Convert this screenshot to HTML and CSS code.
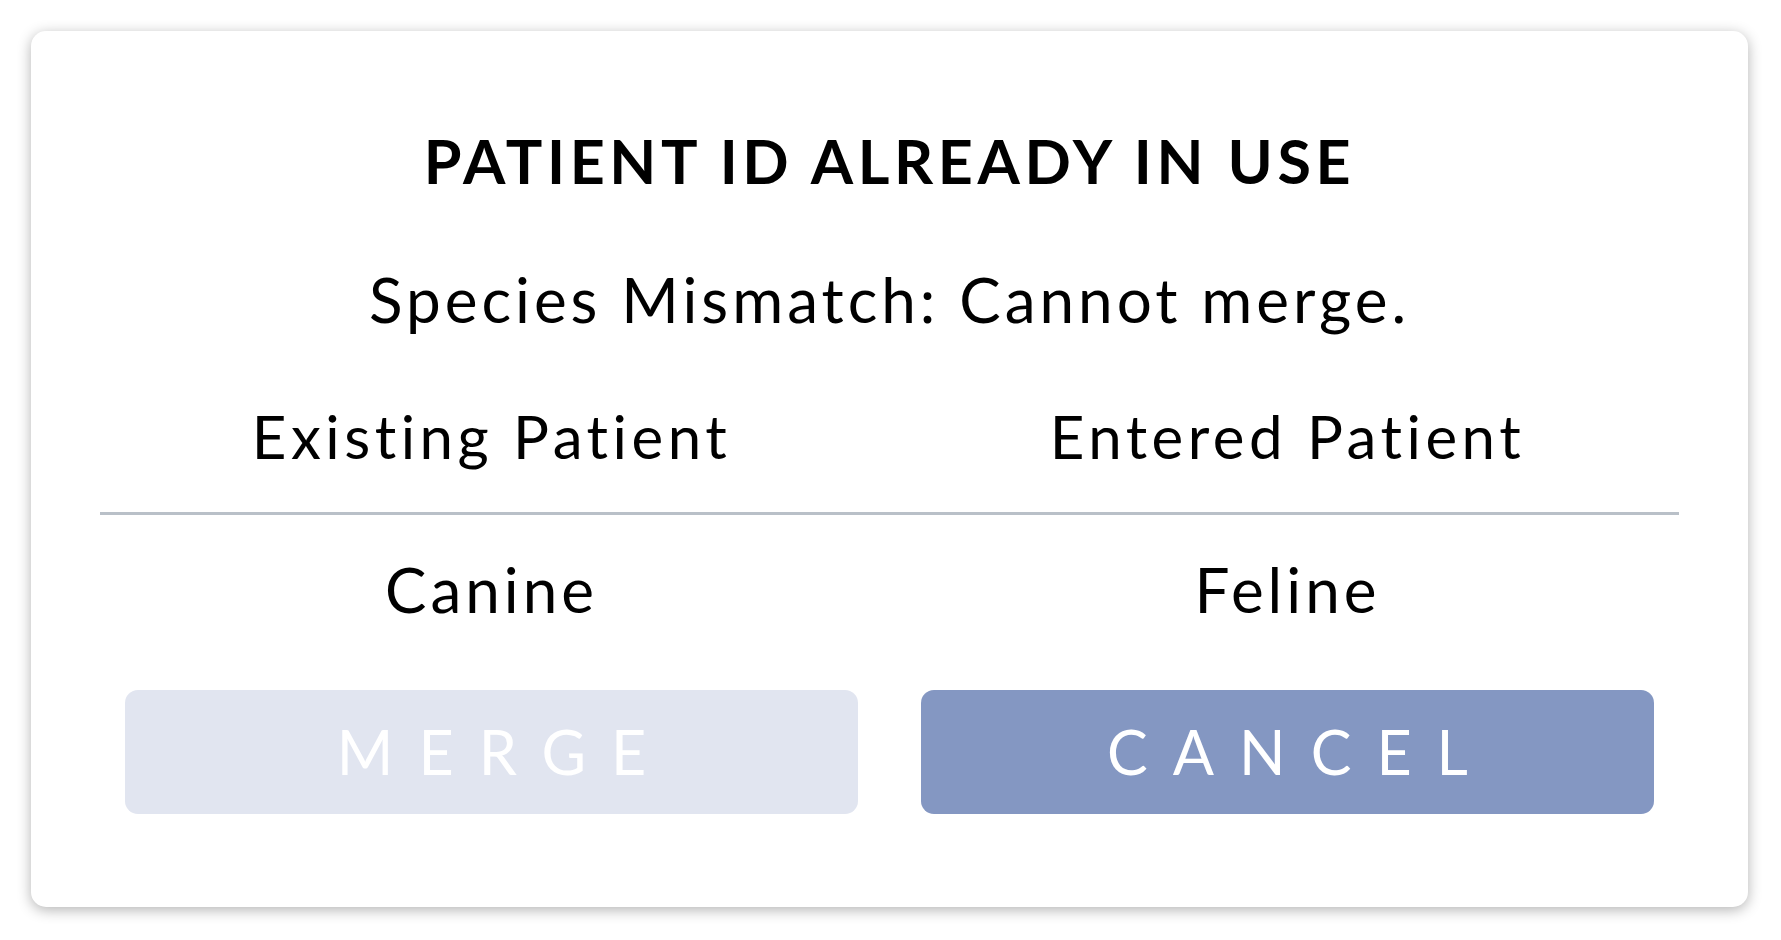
FILE: index.html
```html
<!DOCTYPE html>
<html lang="en">
<head>
    <meta charset="UTF-8">
    <meta name="viewport" content="width=device-width, initial-scale=1.0">
    <title>Patient ID already in use</title>
    <link rel="stylesheet" href="styles.css">
</head>
<body>
    <div class="dialog">
        <h2 class="dialog-title">PATIENT ID ALREADY IN USE</h2>
        <p class="dialog-message">Species Mismatch: Cannot merge.</p>
        <div class="compare-row compare-head">
            <div class="compare-cell">Existing Patient</div>
            <div class="compare-cell">Entered Patient</div>
        </div>
        <hr class="divider">
        <div class="compare-row compare-values">
            <div class="compare-cell">Canine</div>
            <div class="compare-cell">Feline</div>
        </div>
        <div class="compare-row actions">
            <button class="btn btn-merge" disabled>MERGE</button>
            <button class="btn btn-cancel">CANCEL</button>
        </div>
    </div>
</body>
</html>
```

FILE: styles.css
```css
html, body {
    margin: 0;
    height: 100%;
}
body {
    font-family: Lato, "Open Sans", sans-serif;
    background-color: #fff;
    color: #000;
    padding: 31px 33px 33px 31px;
    box-sizing: border-box;
    letter-spacing: 4px;
}
.dialog {
    background-color: #fff;
    height: 100%;
    box-sizing: border-box;
    border-radius: 15px;
    box-shadow: 0 3px 14px rgba(0, 0, 0, 0.3);
    padding: 93px 69px 0 69px;
    display: flex;
    flex-direction: column;
}
.dialog-title {
    margin: 0;
    font-size: 61px;
    font-weight: 700;
    line-height: 1.2;
    text-align: center;
    letter-spacing: 4.6px;
}
.dialog-message {
    margin: 65px 0 0 0;
    font-size: 62px;
    line-height: 1.2;
    text-align: center;
}
.compare-row {
    display: grid;
    grid-template-columns: 1fr 1fr;
    gap: 63px;
    padding: 0 25px;
}
.compare-cell {
    text-align: center;
    line-height: 1.2;
}
.compare-head {
    margin-top: 63px;
    font-size: 60px;
    letter-spacing: 4.5px;
}
.divider {
    margin: 40px 0 0 0;
    border: none;
    height: 3px;
    background-color: #b9c0c8;
}
.compare-values {
    margin-top: 37px;
    font-size: 62px;
}
.actions {
    margin-top: 64px;
}
.btn {
    height: 124px;
    border: none;
    border-radius: 13px;
    color: #fff;
    font-family: Lato, "Open Sans", sans-serif;
    font-size: 61px;
    letter-spacing: 25px;
    padding: 0 0 0 25px;
    cursor: pointer;
}
.btn-merge {
    background-color: #e1e5f0;
    cursor: default;
}
.btn-cancel {
    background-color: #8497c2;
}
```
